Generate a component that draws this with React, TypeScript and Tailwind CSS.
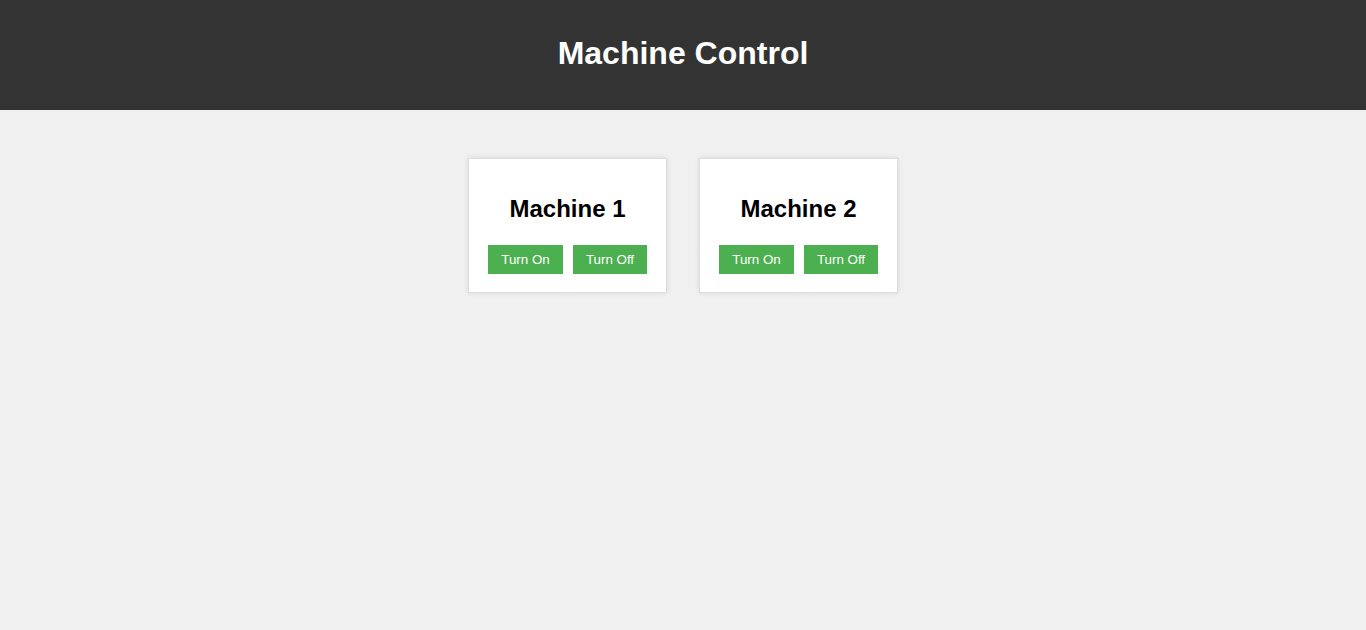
const machines = [
    { id: 1, name: "Machine 1" },
    { id: 2, name: "Machine 2" },
];

const MachineCard = ({ name }: { name: string }) => {
    return (
        <div className="w-[199px] bg-white border border-[#dddddd] shadow-[0_0_5px_rgba(0,0,0,0.1)] pt-[20px] pb-[18px] flex flex-col items-center">
            <h2 className="mt-[16px] mb-[23px] text-[24px] leading-[27px] font-bold text-black">
                {name}
            </h2>
            <div className="flex justify-center gap-[10px]">
                <button className="w-[75px] h-[29px] bg-[#4caf50] text-white text-[13.33px] leading-[16px]">
                    Turn On
                </button>
                <button className="w-[74px] h-[29px] bg-[#4caf50] text-white text-[13.33px] leading-[16px]">
                    Turn Off
                </button>
            </div>
        </div>
    );
};

const App = () => {
    return (
        <div className="min-h-[630px] bg-[#f0f0f0] font-['Liberation_Sans',Arial,sans-serif]">
            <header className="h-[110px] bg-[#333333] pt-[35px] text-center">
                <h1 className="text-[32px] leading-[37px] font-bold text-white">
                    Machine Control
                </h1>
            </header>
            <div className="mt-[48px] flex justify-center gap-[32px]">
                {machines.map((machine) => (
                    <MachineCard key={machine.id} name={machine.name} />
                ))}
            </div>
        </div>
    );
};

export default App;
